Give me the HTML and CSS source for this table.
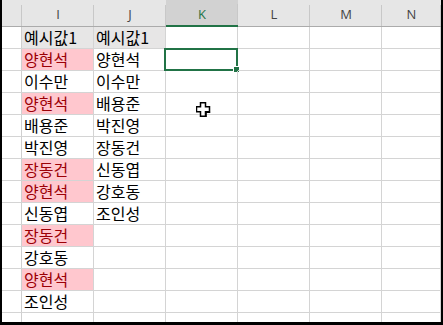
FILE: index.html
```html
<!DOCTYPE html>
<html lang="ko">
<head>
<meta charset="utf-8">
<title>Sheet</title>
<link rel="stylesheet" href="styles.css">
</head>
<body>
<div class="frame">
  <div class="sheet">
    <div class="ch corner"></div>
    <div class="ch">I</div>
    <div class="ch">J</div>
    <div class="ch active">K</div>
    <div class="ch">L</div>
    <div class="ch">M</div>
    <div class="ch">N</div>

    <div class="rh"></div><div class="c head">예시값1</div><div class="c head">예시값1</div><div class="c"></div><div class="c"></div><div class="c"></div><div class="c"></div>
    <div class="rh"></div><div class="c dup">양현석</div><div class="c">양현석</div><div class="c sel"><span class="selbox"></span><span class="handle"></span></div><div class="c"></div><div class="c"></div><div class="c"></div>
    <div class="rh"></div><div class="c">이수만</div><div class="c">이수만</div><div class="c"></div><div class="c"></div><div class="c"></div><div class="c"></div>
    <div class="rh"></div><div class="c dup">양현석</div><div class="c">배용준</div><div class="c cur"><svg class="cursor" width="15" height="16" viewBox="0 0 15 16"><path d="M4.5 0.7h5v4h4v5h-4v4.5h-5v-4.5h-4v-5h4z" fill="#fff" stroke="#000" stroke-width="1.5"/><path d="M10.2 15v-4.6h4" fill="none" stroke="#000" stroke-width="1.2"/></svg></div><div class="c"></div><div class="c"></div><div class="c"></div>
    <div class="rh"></div><div class="c">배용준</div><div class="c">박진영</div><div class="c"></div><div class="c"></div><div class="c"></div><div class="c"></div>
    <div class="rh"></div><div class="c">박진영</div><div class="c">장동건</div><div class="c"></div><div class="c"></div><div class="c"></div><div class="c"></div>
    <div class="rh"></div><div class="c dup">장동건</div><div class="c">신동엽</div><div class="c"></div><div class="c"></div><div class="c"></div><div class="c"></div>
    <div class="rh"></div><div class="c dup">양현석</div><div class="c">강호동</div><div class="c"></div><div class="c"></div><div class="c"></div><div class="c"></div>
    <div class="rh"></div><div class="c">신동엽</div><div class="c">조인성</div><div class="c"></div><div class="c"></div><div class="c"></div><div class="c"></div>
    <div class="rh"></div><div class="c dup">장동건</div><div class="c"></div><div class="c"></div><div class="c"></div><div class="c"></div><div class="c"></div>
    <div class="rh"></div><div class="c">강호동</div><div class="c"></div><div class="c"></div><div class="c"></div><div class="c"></div><div class="c"></div>
    <div class="rh"></div><div class="c dup">양현석</div><div class="c"></div><div class="c"></div><div class="c"></div><div class="c"></div><div class="c"></div>
    <div class="rh"></div><div class="c">조인성</div><div class="c"></div><div class="c"></div><div class="c"></div><div class="c"></div><div class="c"></div>
    <div class="rh"></div><div class="c"></div><div class="c"></div><div class="c"></div><div class="c"></div><div class="c"></div><div class="c"></div>
  </div>
</div>
</body>
</html>
```

FILE: styles.css
```css
html, body {
  margin: 0;
  padding: 0;
  background: #fff;
}
.frame {
  width: 443px;
  height: 325px;
  box-sizing: border-box;
  border-left: 2px solid #000;
  border-right: 2px solid #000;
  border-bottom: 3px solid #000;
  overflow: hidden;
  background: #fff;
}
.sheet {
  display: grid;
  grid-template-columns: 20px repeat(5, 72px) 59px;
  grid-template-rows: 27px repeat(14, 22px);
}
.ch {
  box-sizing: border-box;
  background: linear-gradient(#c8c8c8, #c8c8c8) right bottom / 1px 21px no-repeat, #e6e6e6;
  border-bottom: 1px solid #ababab;
  font-family: "Open Sans", "Noto Sans", sans-serif;
  font-size: 13px;
  color: #444;
  text-align: center;
  line-height: 26px;
  padding-top: 1px;
}
.ch.active {
  background: linear-gradient(#c8c8c8, #c8c8c8) right bottom / 1px 21px no-repeat, #d2d2d2;
  border-bottom: 2px solid #217346;
  color: #217346;
}
.rh {
  box-sizing: border-box;
  border-right: 1px solid #cfcfcf;
  border-bottom: 1px solid #d4d4d4;
  background: #fff;
}
.c {
  position: relative;
  box-sizing: border-box;
  border-right: 1px solid #d4d4d4;
  border-bottom: 1px solid #d4d4d4;
  padding-left: 2px;
  font-family: "Noto Sans CJK KR", "Noto Sans", sans-serif;
  font-size: 16px;
  line-height: 21px;
  color: #000;
  white-space: nowrap;
}
.c.head {
  background: #e7e6e6;
}
.c.dup {
  background: #ffc7ce;
  color: #9c0006;
}
.selbox {
  position: absolute;
  left: -2px;
  top: -1px;
  right: -1px;
  bottom: -1px;
  border: 2px solid #217346;
}
.handle {
  position: absolute;
  right: -3px;
  bottom: -3px;
  width: 5px;
  height: 5px;
  background: #217346;
  border: 1px solid #fff;
}
.cursor {
  position: absolute;
  left: 30px;
  top: 9px;
}
```
